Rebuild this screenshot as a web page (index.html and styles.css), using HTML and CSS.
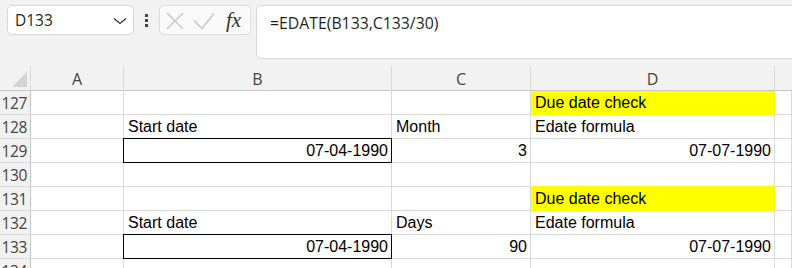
FILE: index.html
```html
<!DOCTYPE html>
<html>
<head>
<meta charset="utf-8">
<link rel="stylesheet" href="styles.css">
</head>
<body>
<div class="toolbar">
  <div class="namebox">
    <span class="name">D133</span>
    <svg class="chev" width="14" height="8" viewBox="0 0 14 8"><path d="M1 1.5 L7 6.5 L13 1.5" fill="none" stroke="#333" stroke-width="1.3"/></svg>
  </div>
  <div class="grip"><i></i><i></i><i></i></div>
  <div class="fxbox">
    <svg class="ico-x" width="18" height="18" viewBox="0 0 18 18"><path d="M1 1 L17 17 M17 1 L1 17" stroke="#c4c4c4" stroke-width="1.3" fill="none"/></svg>
    <svg class="ico-check" width="22" height="18" viewBox="0 0 22 18"><path d="M1 8.5 L9 16.5 L21 1.5" stroke="#c4c4c4" stroke-width="1.3" fill="none"/></svg>
    <span class="fx">fx</span>
  </div>
  <div class="formula">=EDATE(B133,C133/30)</div>
</div>
<div class="sheet">
  <div class="corner"><span class="tri"></span></div>
  <div class="colhdr">A</div>
  <div class="colhdr">B</div>
  <div class="colhdr">C</div>
  <div class="colhdr">D</div>
  <div class="colhdr last"></div>

  <div class="rowhdr">127</div>
  <div class="cell"></div>
  <div class="cell"></div>
  <div class="cell"></div>
  <div class="cell yellow">Due date check</div>
  <div class="cell"></div>

  <div class="rowhdr">128</div>
  <div class="cell"></div>
  <div class="cell">Start date</div>
  <div class="cell">Month</div>
  <div class="cell">Edate formula</div>
  <div class="cell"></div>

  <div class="rowhdr">129</div>
  <div class="cell"></div>
  <div class="cell num boxed">07-04-1990</div>
  <div class="cell num">3</div>
  <div class="cell num">07-07-1990</div>
  <div class="cell"></div>

  <div class="rowhdr">130</div>
  <div class="cell"></div>
  <div class="cell"></div>
  <div class="cell"></div>
  <div class="cell"></div>
  <div class="cell"></div>

  <div class="rowhdr">131</div>
  <div class="cell"></div>
  <div class="cell"></div>
  <div class="cell"></div>
  <div class="cell yellow cover-top">Due date check</div>
  <div class="cell"></div>

  <div class="rowhdr">132</div>
  <div class="cell"></div>
  <div class="cell">Start date</div>
  <div class="cell">Days</div>
  <div class="cell">Edate formula</div>
  <div class="cell"></div>

  <div class="rowhdr">133</div>
  <div class="cell"></div>
  <div class="cell num boxed">07-04-1990</div>
  <div class="cell num">90</div>
  <div class="cell num">07-07-1990</div>
  <div class="cell"></div>

  <div class="rowhdr">134</div>
  <div class="cell"></div>
  <div class="cell"></div>
  <div class="cell"></div>
  <div class="cell"></div>
  <div class="cell"></div>
</div>
</body>
</html>
```

FILE: styles.css
```css
* { box-sizing: border-box; }
html, body {
  margin: 0;
  padding: 0;
  width: 792px;
  height: 268px;
  overflow: hidden;
  background: #f2f2f2;
}
.toolbar {
  height: 66px;
  display: flex;
  align-items: flex-start;
  padding-top: 5px;
  padding-left: 7px;
  font-family: "Open Sans", "Noto Sans", sans-serif;
  color: #222;
}
.namebox {
  width: 127px;
  height: 30px;
  background: #fff;
  border: 1px solid #d6d6d6;
  border-radius: 5px;
  display: flex;
  align-items: center;
  justify-content: space-between;
  padding: 0 6px 0 7px;
}
.name { font-size: 15.5px; line-height: 20px; color: #1f1f1f; }
.chev { margin-top: 1px; }
.grip {
  margin-left: 11px;
  margin-top: 9px;
  display: flex;
  flex-direction: column;
  gap: 2px;
}
.grip i {
  display: block;
  width: 3px;
  height: 3px;
  background: #444;
}
.fxbox {
  margin-left: 11px;
  width: 92px;
  height: 30px;
  background: #fafafa;
  border: 1px solid #dcdcdc;
  border-radius: 5px;
  display: flex;
  align-items: center;
  padding-left: 6px;
}
.ico-x { margin-top: 1px; }
.ico-check { margin-left: 9px; margin-top: 1px; }
.fx {
  margin-left: 11px;
  font-family: "Liberation Serif", "DejaVu Serif", serif;
  font-style: italic;
  font-size: 21px;
  line-height: 24px;
  color: #333;
  margin-top: -1px;
}
.formula {
  margin-left: 5px;
  flex: 1;
  height: 54px;
  margin-right: -8px;
  background: #fff;
  border: 1px solid #d6d6d6;
  border-radius: 5px;
  padding: 6px 0 0 13px;
  font-size: 15.8px;
  line-height: 22px;
  color: #1f1f1f;
}
.sheet {
  display: grid;
  grid-template-columns: 31px 93px 268px 139px 244px 1fr;
  grid-template-rows: 25px repeat(8, 24px);
  height: 202px;
  overflow: hidden;
  background: #fff;
}
.corner, .colhdr {
  background: #f2f2f2;
  border-bottom: 1px solid #c8c8c8;
  border-right: 1px solid #dadada;
}
.corner { position: relative; }
.tri {
  position: absolute;
  right: 3px;
  bottom: 3px;
  width: 0;
  height: 0;
  border-style: solid;
  border-width: 0 0 15px 15px;
  border-color: transparent transparent #d3d3d3 transparent;
}
.colhdr {
  font-family: "Open Sans", "Noto Sans", sans-serif;
  font-size: 16px;
  color: #444;
  display: flex;
  align-items: center;
  justify-content: center;
  padding-top: 1px;
}
.colhdr.last { border-right: none; }
.rowhdr {
  background: #f2f2f2;
  border-right: 1px solid #c4c4c4;
  border-bottom: 1px solid #dadada;
  font-family: "Open Sans", "Noto Sans", sans-serif;
  font-size: 15.5px;
  letter-spacing: -0.4px;
  color: #444;
  display: flex;
  align-items: center;
  justify-content: flex-end;
  padding-right: 3px;
}
.cell {
  border-right: 1px solid #dadada;
  border-bottom: 1px solid #dadada;
  font-family: "Liberation Sans", Arial, sans-serif;
  font-size: 16px;
  color: #000;
  display: flex;
  align-items: center;
  padding: 1px 3px 0 4px;
  white-space: nowrap;
}
.cell.num { justify-content: flex-end; }
.yellow {
  background: #ffff00;
  border-right-color: #ffff00;
  border-bottom-color: #ffff00;
}
.cover-top { box-shadow: 0 -1px 0 #ffff00; }
.boxed { position: relative; }
.boxed::after {
  content: "";
  position: absolute;
  top: -1px;
  left: -1px;
  right: -1px;
  bottom: -1px;
  border: 1px solid #000;
}
```
